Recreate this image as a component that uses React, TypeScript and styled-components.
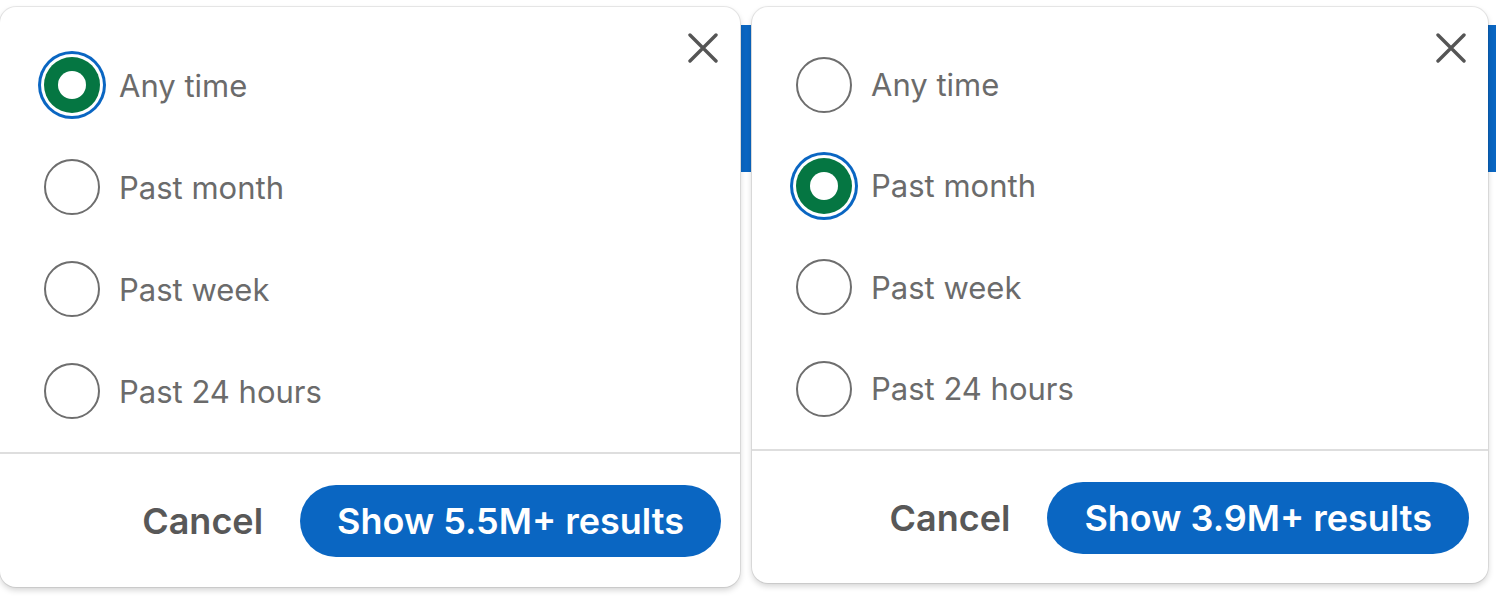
import React from "react";
import styled, { createGlobalStyle } from "styled-components";

const Global = createGlobalStyle`
  html, body { margin: 0; padding: 0; background: #ffffff; }
  body { font-family: Inter, "Noto Sans", "Liberation Sans", sans-serif; -webkit-font-smoothing: antialiased; }
  * { box-sizing: border-box; }
`;

const Page = styled.div`
  display: flex;
  align-items: flex-start;
  width: 1496px;
  height: 596px;
  padding-top: 7px;
  overflow: hidden;
  background: #ffffff;
`;

const Gutter = styled.div<{ $w: number }>`
  width: ${(p) => p.$w}px;
  flex: none;
  align-self: stretch;
  display: flex;
  justify-content: center;
  padding-top: 18px;
`;

const BlueStrip = styled.div<{ $w: number }>`
  width: ${(p) => p.$w}px;
  height: 147px;
  background: #0a66c2;
`;

const Panel = styled.div<{ $w: number }>`
  width: ${(p) => p.$w}px;
  flex: none;
  background: #ffffff;
  border-radius: 16px;
  box-shadow: 0 0 0 1px rgba(0, 0, 0, 0.08), 0 3px 6px rgba(0, 0, 0, 0.18);
  display: flex;
  flex-direction: column;
  position: relative;
  z-index: 1;
`;

const Body = styled.div`
  display: flex;
  align-items: flex-start;
`;

const List = styled.div`
  flex: 1;
  display: flex;
  flex-direction: column;
  padding: 27px 0 10px 44px;
`;

const Row = styled.label<{ $h: number }>`
  display: flex;
  align-items: center;
  gap: 19px;
  height: ${(p) => p.$h}px;
  cursor: pointer;
`;

const Radio = styled.span<{ $checked: boolean }>`
  width: 56px;
  height: 56px;
  flex: none;
  border-radius: 50%;
  display: flex;
  align-items: center;
  justify-content: center;
  border: ${(p) => (p.$checked ? "none" : "2px solid #6e6e6e")};
  background: ${(p) => (p.$checked ? "#057642" : "#ffffff")};
  box-shadow: ${(p) =>
    p.$checked ? "0 0 0 3px #ffffff, 0 0 0 6px #0a66c2" : "none"};
`;

const Dot = styled.span`
  width: 28px;
  height: 28px;
  border-radius: 50%;
  background: #ffffff;
`;

const Label = styled.span`
  font-size: 31px;
  color: #6b6b6b;
  font-weight: 400;
`;

const Close = styled.button`
  flex: none;
  width: 32px;
  height: 32px;
  margin: 25px 21px 0 0;
  padding: 0;
  border: none;
  background: transparent;
  display: flex;
  align-items: center;
  justify-content: center;
  cursor: pointer;
`;

const Footer = styled.div<{ $pb: number }>`
  border-top: 2px solid #dedede;
  display: flex;
  justify-content: flex-end;
  align-items: center;
  gap: 37px;
  padding: 31px 19px ${(p) => p.$pb}px 0;
`;

const CancelBtn = styled.button`
  border: none;
  background: transparent;
  padding: 0;
  font-family: inherit;
  font-size: 36px;
  font-weight: 600;
  color: #585858;
  cursor: pointer;
`;

const PrimaryBtn = styled.button`
  height: 72px;
  padding: 0 37px;
  border: none;
  border-radius: 36px;
  background: #0a66c2;
  color: #ffffff;
  font-family: inherit;
  font-size: 36px;
  font-weight: 600;
  cursor: pointer;
`;

const options = ["Any time", "Past month", "Past week", "Past 24 hours"];

const XIcon = () => (
  <svg width="30" height="30" viewBox="0 0 30 30" fill="none">
    <path d="M2 2 L28 28 M28 2 L2 28" stroke="#555555" strokeWidth="3.4" strokeLinecap="round" />
  </svg>
);

function FilterPanel(props: { width: number; selected: number; count: string; rowH: number; pb: number }) {
  return (
    <Panel $w={props.width}>
      <Body>
        <List>
          {options.map((o, i) => (
            <Row key={o} $h={props.rowH}>
              <Radio $checked={i === props.selected}>{i === props.selected && <Dot />}</Radio>
              <Label>{o}</Label>
            </Row>
          ))}
        </List>
        <Close aria-label="Close">
          <XIcon />
        </Close>
      </Body>
      <Footer $pb={props.pb}>
        <CancelBtn>Cancel</CancelBtn>
        <PrimaryBtn>Show {props.count} results</PrimaryBtn>
      </Footer>
    </Panel>
  );
}

export default function App() {
  return (
    <>
      <Global />
      <Page>
        <FilterPanel width={740} selected={0} count="5.5M+" rowH={102} pb={30} />
        <Gutter $w={12}>
          <BlueStrip $w={10} />
        </Gutter>
        <FilterPanel width={736} selected={1} count="3.9M+" rowH={101.3} pb={29} />
        <Gutter $w={8}>
          <BlueStrip $w={8} />
        </Gutter>
      </Page>
    </>
  );
}
